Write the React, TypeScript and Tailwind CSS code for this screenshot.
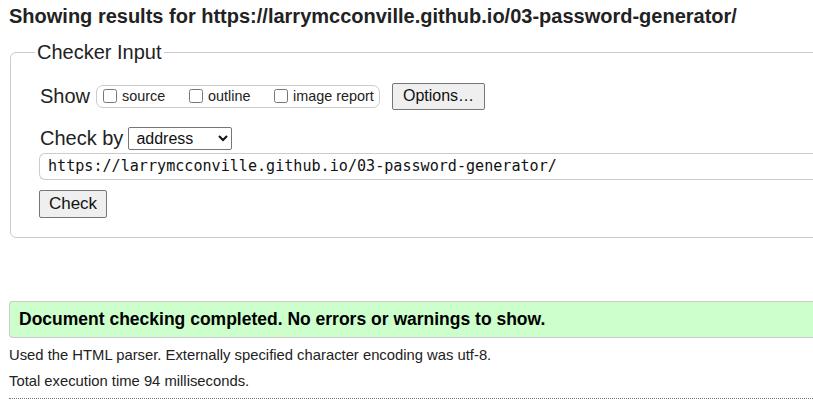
export default function App() {
  return (
    <div className="w-[813px] h-[408px] overflow-hidden bg-white text-[#222] font-['Liberation_Sans',Arial,sans-serif]">
      <div className="pl-[9px] pt-[4px]">
        <h2 className="text-[20px] font-bold leading-[24px] whitespace-nowrap">
          Showing results for https://larrymcconville.github.io/03-password-generator/
        </h2>

        <fieldset className="mt-[13px] ml-px w-[830px] h-[197px] border border-[#ccc] rounded-[6px] pl-[29px] pr-0 pt-0">
          <legend className="px-[2px] -ml-[5px] text-[20px] leading-[23px] text-[#222]">
            Checker Input
          </legend>

          <div className="flex items-center mt-[19px] h-[26px]">
            <span className="text-[20px] leading-[24px]">Show</span>
            <div className="ml-[6px] flex items-center h-[23px] w-[284px] border border-[#ccc] rounded-[7px] pl-[6px] text-[14.4px]">
              <label className="flex items-center w-[86px]">
                <input type="checkbox" className="w-[14px] h-[14px] m-0" />
                <span className="ml-[5px] mt-[2px]">source</span>
              </label>
              <label className="flex items-center w-[85px]">
                <input type="checkbox" className="w-[14px] h-[14px] m-0" />
                <span className="ml-[5px] mt-[2px]">outline</span>
              </label>
              <label className="flex items-center">
                <input type="checkbox" className="w-[14px] h-[14px] m-0" />
                <span className="ml-[5px] mt-[2px]">image report</span>
              </label>
            </div>
            <button className="ml-[12px] h-[27px] w-[93px] bg-[#efefef] border border-[#767676] rounded-[2px] text-[16px] text-[#111]">
              Options…
            </button>
          </div>

          <div className="flex items-center mt-[17px] h-[24px]">
            <span className="text-[20px] leading-[24px]">Check by</span>
            <select
              defaultValue="address"
              className="ml-[5px] h-[23px] w-[104px] border border-[#767676] rounded-[2px] text-[16px] pl-[3px] bg-white text-[#111]"
            >
              <option value="address">address</option>
              <option value="upload">file upload</option>
              <option value="text">text input</option>
            </select>
          </div>

          <div className="mt-[3px] -ml-px h-[27px] border border-[#ccc] rounded-l-[6px] border-r-0 flex items-center pl-[8px] font-['DejaVu_Sans_Mono',monospace] text-[15.1px] text-[#111] whitespace-nowrap">
            https://larrymcconville.github.io/03-password-generator/
          </div>

          <button className="mt-[10px] -ml-px h-[28px] w-[68px] bg-[#efefef] border border-[#767676] rounded-[2px] text-[17px] text-[#111]">
            Check
          </button>
        </fieldset>

        <div className="mt-[63px] h-[37px] bg-[#ccffcc] border border-[#ccc] border-r-0 rounded-l-[4px] flex items-center pl-[9px]">
          <span className="text-[17.5px] font-bold text-black">
            Document checking completed. No errors or warnings to show.
          </span>
        </div>

        <p className="mt-[8px] text-[14.8px] leading-[18px]">
          Used the HTML parser. Externally specified character encoding was utf-8.
        </p>
        <p className="mt-[8px] text-[14.8px] leading-[18px]">
          Total execution time 94 milliseconds.
        </p>
        <div className="mt-[8px] border-t border-dotted border-[#777]" />
      </div>
    </div>
  );
}
